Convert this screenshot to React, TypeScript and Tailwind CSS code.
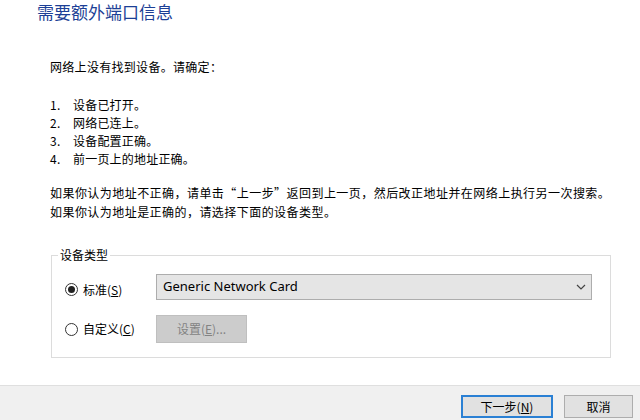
import React from "react";

const cjk = "font-['Noto_Sans_CJK_SC','Noto_Sans',sans-serif]";

function Radio({ checked }: { checked: boolean }) {
  return (
    <span className="w-[13px] h-[13px] rounded-full border border-[#333] flex items-center justify-center bg-white shrink-0">
      {checked && <span className="w-[7px] h-[7px] rounded-full bg-[#222]" />}
    </span>
  );
}

export default function App() {
  return (
    <div className={`w-[640px] h-[420px] bg-white flex flex-col overflow-hidden text-black ${cjk}`}>
      <div className="flex-1 flex flex-col">
        <div className="pl-[37px] text-[17px] leading-[24px] text-[#1c3f96]">需要额外端口信息</div>
        <div className="pl-[50px] text-[12px]">
          <p className="mt-[34px] leading-[18px] tracking-[0.3px]">网络上没有找到设备。请确定：</p>
          <div className="mt-[20px] leading-[18px] tracking-[0.2px]">
            {["设备已打开。", "网络已连上。", "设备配置正确。", "前一页上的地址正确。"].map((t, i) => (
              <div key={i} className="flex">
                <span className="w-[23px]">{i + 1}.</span>
                <span>{t}</span>
              </div>
            ))}
          </div>
          <div className="mt-[15px] leading-[19px] tracking-[0.45px]">
            <p>如果你认为地址不正确，请单击“上一步”返回到上一页，然后改正地址并在网络上执行另一次搜索。</p>
            <p>如果你认为地址是正确的，请选择下面的设备类型。</p>
          </div>
        </div>
        <fieldset className="ml-[51px] mt-[26px] w-[560px] border border-[#dcdcdc] pt-[11px] pb-[14px] text-[12px]">
          <legend className="ml-[6px] px-[2px] leading-[16px]">设备类型</legend>
          <div className="pl-[13px]">
            <div className="flex items-center">
              <div className="w-[91px] flex items-center gap-[5px] mt-[5px]">
                <Radio checked />
                <span>
                  标准(<span className="underline">S</span>)
                </span>
              </div>
              <div className="w-[436px] h-[26px] bg-[#e5e5e5] border border-[#adadad] flex items-center justify-between pl-[6px] pr-[5px]">
                <span className="font-['Noto_Sans',sans-serif] text-[13px]">Generic Network Card</span>
                <svg width="10" height="6" viewBox="0 0 10 6">
                  <path d="M1 1 L5 5 L9 1" fill="none" stroke="#444" strokeWidth="1.2" />
                </svg>
              </div>
            </div>
            <div className="flex items-center mt-[15px]">
              <div className="w-[91px] flex items-center gap-[5px]">
                <Radio checked={false} />
                <span>
                  自定义(<span className="underline">C</span>)
                </span>
              </div>
              <div className="w-[91px] h-[28px] bg-[#cccccc] border border-[#bfbfbf] flex items-center justify-center text-[#838383]">
                <span>
                  设置(<span className="underline">E</span>)...
                </span>
              </div>
            </div>
          </div>
        </fieldset>
      </div>
      <div className="h-[35px] bg-[#f0f0f0] border-t border-[#dfdfdf] flex justify-end items-start gap-[11px] pr-[7px] pt-[9px] text-[12px]">
        <div className="w-[92px] h-[23px] bg-[#e1e1e1] border-2 border-[#2a80d4] flex items-center justify-center">
          <span>
            下一步(<span className="underline">N</span>)
          </span>
        </div>
        <div className="w-[69px] h-[23px] bg-[#e1e1e1] border border-[#adadad] flex items-center justify-center">
          取消
        </div>
      </div>
    </div>
  );
}
